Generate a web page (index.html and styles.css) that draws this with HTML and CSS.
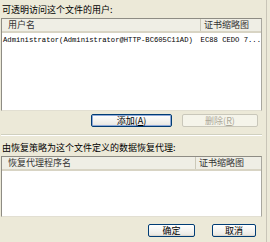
FILE: index.html
```html
<!DOCTYPE html>
<html lang="zh-CN">
  <head>
    <meta charset="UTF-8" />
    <title>加密详细信息</title>
    <link rel="stylesheet" href="styles.css">
  </head>
  <body>
    <div class="dialog">
      <div class="label">可透明访问这个文件的用户:</div>
      <div class="list users">
        <div class="list-head">
          <div class="col-name">用户名</div>
          <div class="col-cert">证书缩略图</div>
        </div>
        <div class="list-row">
          <div class="col-name mono">Administrator(Administrator@HTTP-BC605C11AD)</div>
          <div class="col-cert mono">EC88 CEDO 7...</div>
        </div>
      </div>
      <div class="btn-row">
        <div class="btn focus">添加(<u>A</u>)</div>
        <div class="btn disabled">删除(<u>R</u>)</div>
      </div>
      <div class="sep"></div>
      <div class="label">由恢复策略为这个文件定义的数据恢复代理:</div>
      <div class="list agents">
        <div class="list-head">
          <div class="col-name">恢复代理程序名</div>
          <div class="col-cert">证书缩略图</div>
        </div>
      </div>
      <div class="btn-row bottom">
        <div class="btn ok">确定</div>
        <div class="btn cancel">取消</div>
      </div>
    </div>
  </body>
</html>
```

FILE: styles.css
```css
* {
  margin: 0;
  padding: 0;
  box-sizing: border-box;
}
body {
  width: 270px;
  height: 242px;
  background-color: #ece9d8;
  font-family: "Noto Sans CJK SC", "Liberation Sans", sans-serif;
  font-size: 9px;
  color: #000;
  overflow: hidden;
}
.dialog {
  width: 267px;
  height: 242px;
  padding: 4px 4px 0 1px;
  display: flex;
  flex-direction: column;
  border-right: 1px solid #c9c5b8;
}
.label {
  height: 12px;
  line-height: 12px;
  padding-left: 1px;
}
.list {
  margin-top: 2px;
  background-color: #fff;
  border: 1px solid #9c9a92;
  border-color: #8e8c84 #a9a79f #e2dfd2 #8e8c84;
}
.users {
  height: 93px;
}
.agents {
  height: 61px;
}
.list-head {
  display: flex;
  height: 14px;
  line-height: 12px;
  background-color: #efeee5;
  border-bottom: 2px solid #d8d4c4;
  color: #333;
}
.list-head .col-name {
  border-right: 1px solid #cbc8b8;
  padding-left: 6px;
}
.list-head .col-cert {
  padding-left: 3px;
}
.col-name {
  width: 199px;
}
.agents .col-name {
  width: 194px;
}
.col-cert {
  flex: 1;
}
.list-row {
  display: flex;
  height: 10px;
  line-height: 10px;
  margin-top: 2px;
}
.list-row .col-name {
  padding-left: 1px;
  overflow: hidden;
}
.list-row .col-cert {
  padding-left: 3px;
}
.mono {
  font-family: "Liberation Mono", monospace;
  font-size: 7.2px;
  white-space: nowrap;
}
.btn-row {
  display: flex;
  justify-content: flex-end;
  gap: 10px;
  margin-top: 3px;
  padding-right: 4px;
}
.btn {
  width: 81px;
  height: 13px;
  line-height: 11px;
  text-align: center;
  border: 1px solid #003c74;
  border-radius: 2px;
  background: linear-gradient(#ffffff, #ecebe6 85%, #d6d0c5);
}
.btn u {
  text-decoration: underline;
}
.btn.focus {
  box-shadow: inset 0 0 0 1px #8fa9d8;
}
.btn.disabled {
  width: 76px;
  color: #aca899;
  border-color: #c9c7ba;
  background: #f5f4ea;
}
.sep {
  height: 2px;
  margin-top: 7px;
  margin-bottom: 6px;
  border-top: 1px solid #d0d0bf;
  border-bottom: 1px solid #ffffff;
}
.bottom {
  margin-top: 7px;
  gap: 17px;
  padding-right: 6px;
}
.btn.ok {
  width: 47px;
}
.btn.cancel {
  width: 44px;
}
```
